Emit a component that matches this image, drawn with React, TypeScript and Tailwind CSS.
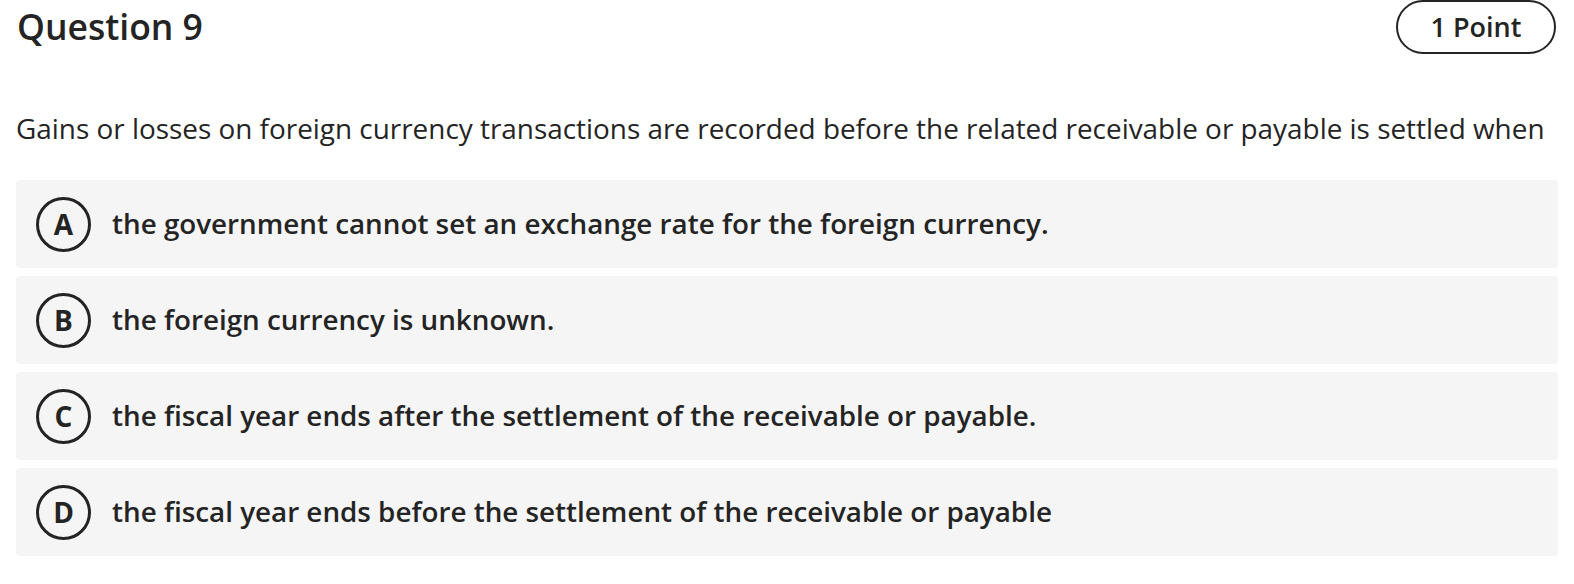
const OPTIONS = [
  { key: 'A', text: 'the government cannot set an exchange rate for the foreign currency.' },
  { key: 'B', text: 'the foreign currency is unknown.' },
  { key: 'C', text: 'the fiscal year ends after the settlement of the receivable or payable.' },
  { key: 'D', text: 'the fiscal year ends before the settlement of the receivable or payable' },
]

export default function App() {
  return (
    <div className="w-[1574px] h-[584px] bg-white px-4 text-[#242424] font-['Open_Sans',sans-serif]">
      <div className="flex items-center justify-between h-[54px]">
        <h1 className="text-[35.5px] font-semibold leading-none pl-[1px]">Question 9</h1>
        <div className="mr-[2px] h-[54px] w-[160px] rounded-full border-2 border-[#242424] flex items-center justify-center text-[27px] font-semibold">
          1 Point
        </div>
      </div>

      <p className="mt-[56px] text-[27.9px] leading-9">
        Gains or losses on foreign currency transactions are recorded before the related receivable or payable is settled when
      </p>

      <div className="mt-[34px] flex flex-col gap-2">
        {OPTIONS.map(o => (
          <div key={o.key} className="h-[88px] rounded bg-[#f5f5f5] flex items-center pl-5 gap-[21px]">
            <span className="w-[55px] h-[55px] rounded-full border-[3px] border-[#242424] flex items-center justify-center text-[28px] font-bold leading-none">
              {o.key}
            </span>
            <span className="text-[27.8px] font-semibold">{o.text}</span>
          </div>
        ))}
      </div>
    </div>
  )
}
